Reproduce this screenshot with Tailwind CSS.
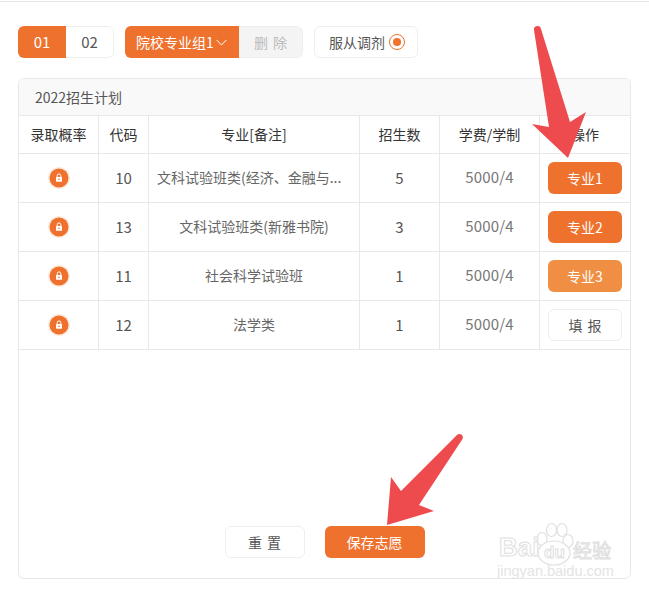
<!DOCTYPE html>
<html lang="zh-CN">
  <head>
    <meta charset="UTF-8" />
    <meta name="viewport" content="width=device-width, initial-scale=1.0" />
    <title>2022招生计划</title>
    <script src="https://cdn.jsdelivr.net/npm/@tailwindcss/browser@4"></script>
  </head>
  <body class="bg-white text-[14px] text-[#555] font-['Noto_Sans_CJK_SC',sans-serif]">
    <div class="relative w-[649px] h-[593px] overflow-hidden">
      <div class="mt-px h-[1px] bg-[#e8e8e8]"></div>

      <div class="px-[18px] pt-6 flex items-start">
        <!-- 志愿切换 -->
        <div class="flex h-8 w-24 rounded-md overflow-hidden text-[15px]">
          <div class="w-12 bg-[#ee712e] text-white flex items-center justify-center">01</div>
          <div class="w-12 border border-l-0 border-[#eee] rounded-r-md flex items-center justify-center">02</div>
        </div>
        <div class="ml-[11px] flex h-8 rounded-md overflow-hidden">
          <div class="w-[114px] bg-[#ee712e] text-white flex items-center pl-[11px] whitespace-nowrap">
            院校专业组1
            <svg class="w-[11px] h-[7px] ml-[2px]" viewBox="0 0 11 7" fill="none" stroke="#fff" stroke-width="1">
              <path d="M0.5 0.8l5 5.2 5-5.2" />
            </svg>
          </div>
          <div class="w-16 bg-[#f4f4f4] border border-l-0 border-[#eee] rounded-r-md text-[#bbb] flex items-center justify-center tracking-[5px] pl-[5px]">删除</div>
        </div>
        <div class="ml-[11px] h-8 w-[104px] border border-[#eee] rounded-md flex items-center pl-[14px] gap-[4px] whitespace-nowrap">
          服从调剂
          <span class="w-[16px] h-[16px] rounded-full border border-[#ee712e] flex items-center justify-center">
            <span class="w-[8px] h-[8px] rounded-full bg-[#ee712e]"></span>
          </span>
        </div>
      </div>

      <!-- 招生计划 -->
      <div class="mx-[18px] mt-5 h-[501px] border border-[#e8e8e8] rounded-md overflow-hidden flex flex-col">
        <div class="h-[37px] shrink-0 bg-[#f9f9f9] border-b border-[#e8e8e8] pl-4 flex items-center">2022招生计划</div>

        <div class="grid grid-cols-[80px_50px_211px_80px_100px_90px] grid-rows-[38px_49px_49px_49px_49px] text-center">
          <div class="border-r border-b border-[#e8e8e8] flex items-center justify-center text-[#333]">录取概率</div>
          <div class="border-r border-b border-[#e8e8e8] flex items-center justify-center text-[#333]">代码</div>
          <div class="border-r border-b border-[#e8e8e8] flex items-center justify-center text-[#333]">专业[备注]</div>
          <div class="border-r border-b border-[#e8e8e8] flex items-center justify-center text-[#333]">招生数</div>
          <div class="border-r border-b border-[#e8e8e8] flex items-center justify-center text-[#333]">学费/学制</div>
          <div class="border-b border-[#e8e8e8] flex items-center justify-center text-[#333]">操作</div>

          <div class="border-r border-b border-[#e8e8e8] flex items-center justify-center">
            <svg class="w-[22px] h-[22px]" viewBox="0 0 22 22"><circle cx="11" cy="11" r="11" fill="#fdeadd" /><circle cx="11" cy="11" r="9.500" fill="#ee712e" /><path d="M9.200 10V8.700a1.800 1.800 0 0 1 3.600 0V10" fill="none" stroke="#fff" stroke-width="1" /><rect x="8" y="10" width="6" height="4.800" rx="0.500" fill="#fff" /><circle cx="11" cy="12.300" r="0.800" fill="#ee712e" /></svg>
          </div>
          <div class="border-r border-b border-[#e8e8e8] flex items-center justify-center text-[15px]">10</div>
          <div class="border-r border-b border-[#e8e8e8] flex items-center justify-start pl-2 pb-[2px] text-[#666] whitespace-nowrap">文科试验班类(经济、金融与...</div>
          <div class="border-r border-b border-[#e8e8e8] flex items-center justify-center text-[15px]">5</div>
          <div class="border-r border-b border-[#e8e8e8] flex items-center justify-center pb-[2px] text-[15px] tracking-[0.2px] text-[#777]">5000/4</div>
          <div class="border-b border-[#e8e8e8] flex items-center justify-center">
            <button class="w-[74px] h-8 rounded-md bg-[#ee712e] text-white">专业1</button>
          </div>

          <div class="border-r border-b border-[#e8e8e8] flex items-center justify-center">
            <svg class="w-[22px] h-[22px]" viewBox="0 0 22 22"><circle cx="11" cy="11" r="11" fill="#fdeadd" /><circle cx="11" cy="11" r="9.500" fill="#ee712e" /><path d="M9.200 10V8.700a1.800 1.800 0 0 1 3.600 0V10" fill="none" stroke="#fff" stroke-width="1" /><rect x="8" y="10" width="6" height="4.800" rx="0.500" fill="#fff" /><circle cx="11" cy="12.300" r="0.800" fill="#ee712e" /></svg>
          </div>
          <div class="border-r border-b border-[#e8e8e8] flex items-center justify-center text-[15px]">13</div>
          <div class="border-r border-b border-[#e8e8e8] flex items-center justify-center pb-[2px] text-[#666] whitespace-nowrap">文科试验班类(新雅书院)</div>
          <div class="border-r border-b border-[#e8e8e8] flex items-center justify-center text-[15px]">3</div>
          <div class="border-r border-b border-[#e8e8e8] flex items-center justify-center pb-[2px] text-[15px] tracking-[0.2px] text-[#777]">5000/4</div>
          <div class="border-b border-[#e8e8e8] flex items-center justify-center">
            <button class="w-[74px] h-8 rounded-md bg-[#ee712e] text-white">专业2</button>
          </div>

          <div class="border-r border-b border-[#e8e8e8] flex items-center justify-center">
            <svg class="w-[22px] h-[22px]" viewBox="0 0 22 22"><circle cx="11" cy="11" r="11" fill="#fdeadd" /><circle cx="11" cy="11" r="9.500" fill="#ee712e" /><path d="M9.200 10V8.700a1.800 1.800 0 0 1 3.600 0V10" fill="none" stroke="#fff" stroke-width="1" /><rect x="8" y="10" width="6" height="4.800" rx="0.500" fill="#fff" /><circle cx="11" cy="12.300" r="0.800" fill="#ee712e" /></svg>
          </div>
          <div class="border-r border-b border-[#e8e8e8] flex items-center justify-center text-[15px]">11</div>
          <div class="border-r border-b border-[#e8e8e8] flex items-center justify-center pb-[2px] text-[#666] whitespace-nowrap">社会科学试验班</div>
          <div class="border-r border-b border-[#e8e8e8] flex items-center justify-center text-[15px]">1</div>
          <div class="border-r border-b border-[#e8e8e8] flex items-center justify-center pb-[2px] text-[15px] tracking-[0.2px] text-[#777]">5000/4</div>
          <div class="border-b border-[#e8e8e8] flex items-center justify-center">
            <button class="w-[74px] h-8 rounded-md bg-[#f08f44] text-white">专业3</button>
          </div>

          <div class="border-r border-b border-[#e8e8e8] flex items-center justify-center">
            <svg class="w-[22px] h-[22px]" viewBox="0 0 22 22"><circle cx="11" cy="11" r="11" fill="#fdeadd" /><circle cx="11" cy="11" r="9.500" fill="#ee712e" /><path d="M9.200 10V8.700a1.800 1.800 0 0 1 3.600 0V10" fill="none" stroke="#fff" stroke-width="1" /><rect x="8" y="10" width="6" height="4.800" rx="0.500" fill="#fff" /><circle cx="11" cy="12.300" r="0.800" fill="#ee712e" /></svg>
          </div>
          <div class="border-r border-b border-[#e8e8e8] flex items-center justify-center text-[15px]">12</div>
          <div class="border-r border-b border-[#e8e8e8] flex items-center justify-center pb-[2px] text-[#666] whitespace-nowrap">法学类</div>
          <div class="border-r border-b border-[#e8e8e8] flex items-center justify-center text-[15px]">1</div>
          <div class="border-r border-b border-[#e8e8e8] flex items-center justify-center pb-[2px] text-[15px] tracking-[0.2px] text-[#777]">5000/4</div>
          <div class="border-b border-[#e8e8e8] flex items-center justify-center">
            <button class="w-[74px] h-8 rounded-md border border-[#eee] bg-white text-[#555] tracking-[5px] pl-[5px]">填报</button>
          </div>
        </div>

        <div class="mt-auto pb-5 flex justify-center gap-5">
          <button class="w-20 h-8 rounded-md border border-[#eee] bg-white text-[#555] tracking-[5px] pl-[5px]">重置</button>
          <button class="w-[100px] h-8 rounded-md bg-[#ee712e] text-white">保存志愿</button>
        </div>
      </div>

      <!-- 标注箭头 -->
      <svg class="absolute inset-0 w-[649px] h-[593px] pointer-events-none" viewBox="0 0 649 593">
        <path d="M534 30a3.500 3.500 0 0 1 7-1L570 122 586 112 568 158 532 124 549 127Z" fill="#ee4b4f" />
        <path d="M457.500 434.500a3.500 3.500 0 0 1 5 4.500L419 505 434 511 387 525 391 477 401 491Z" fill="#ee4b4f" />
      </svg>

      <!-- 水印 -->
      <svg class="absolute left-[532px] top-[520px] w-[44px] h-[50px]" viewBox="0 0 44 50" fill="#fff" stroke="#e0e0e0" stroke-width="1.200">
        <ellipse cx="10" cy="19" rx="5" ry="6.500" />
        <ellipse cx="19.500" cy="10" rx="5" ry="6.500" />
        <ellipse cx="30" cy="10" rx="5" ry="6.500" />
        <ellipse cx="36" cy="21" rx="5" ry="6.500" />
        <ellipse cx="22" cy="33" rx="16" ry="12" />
      </svg>
      <div class="absolute left-[499px] top-[535px] text-[26px] leading-[25px] font-bold text-white [-webkit-text-stroke:1px_#e0e0e0] font-['Liberation_Sans',sans-serif]">Bai</div>
      <div class="absolute left-[544px] top-[545px] text-[17px] leading-[16px] font-bold text-white [-webkit-text-stroke:1px_#e0e0e0] font-['Liberation_Sans',sans-serif]">du</div>
      <div class="absolute left-[573px] top-[540px] text-[19px] leading-[20px] text-white [-webkit-text-stroke:1px_#e0e0e0] whitespace-nowrap">经验</div>
      <div class="absolute left-[497px] top-[563px] text-[14.500px] leading-[16px] text-[#e4e4e4] whitespace-nowrap font-['Liberation_Sans',sans-serif]">jingyan.baidu.com</div>
    </div>
  </body>
</html>
